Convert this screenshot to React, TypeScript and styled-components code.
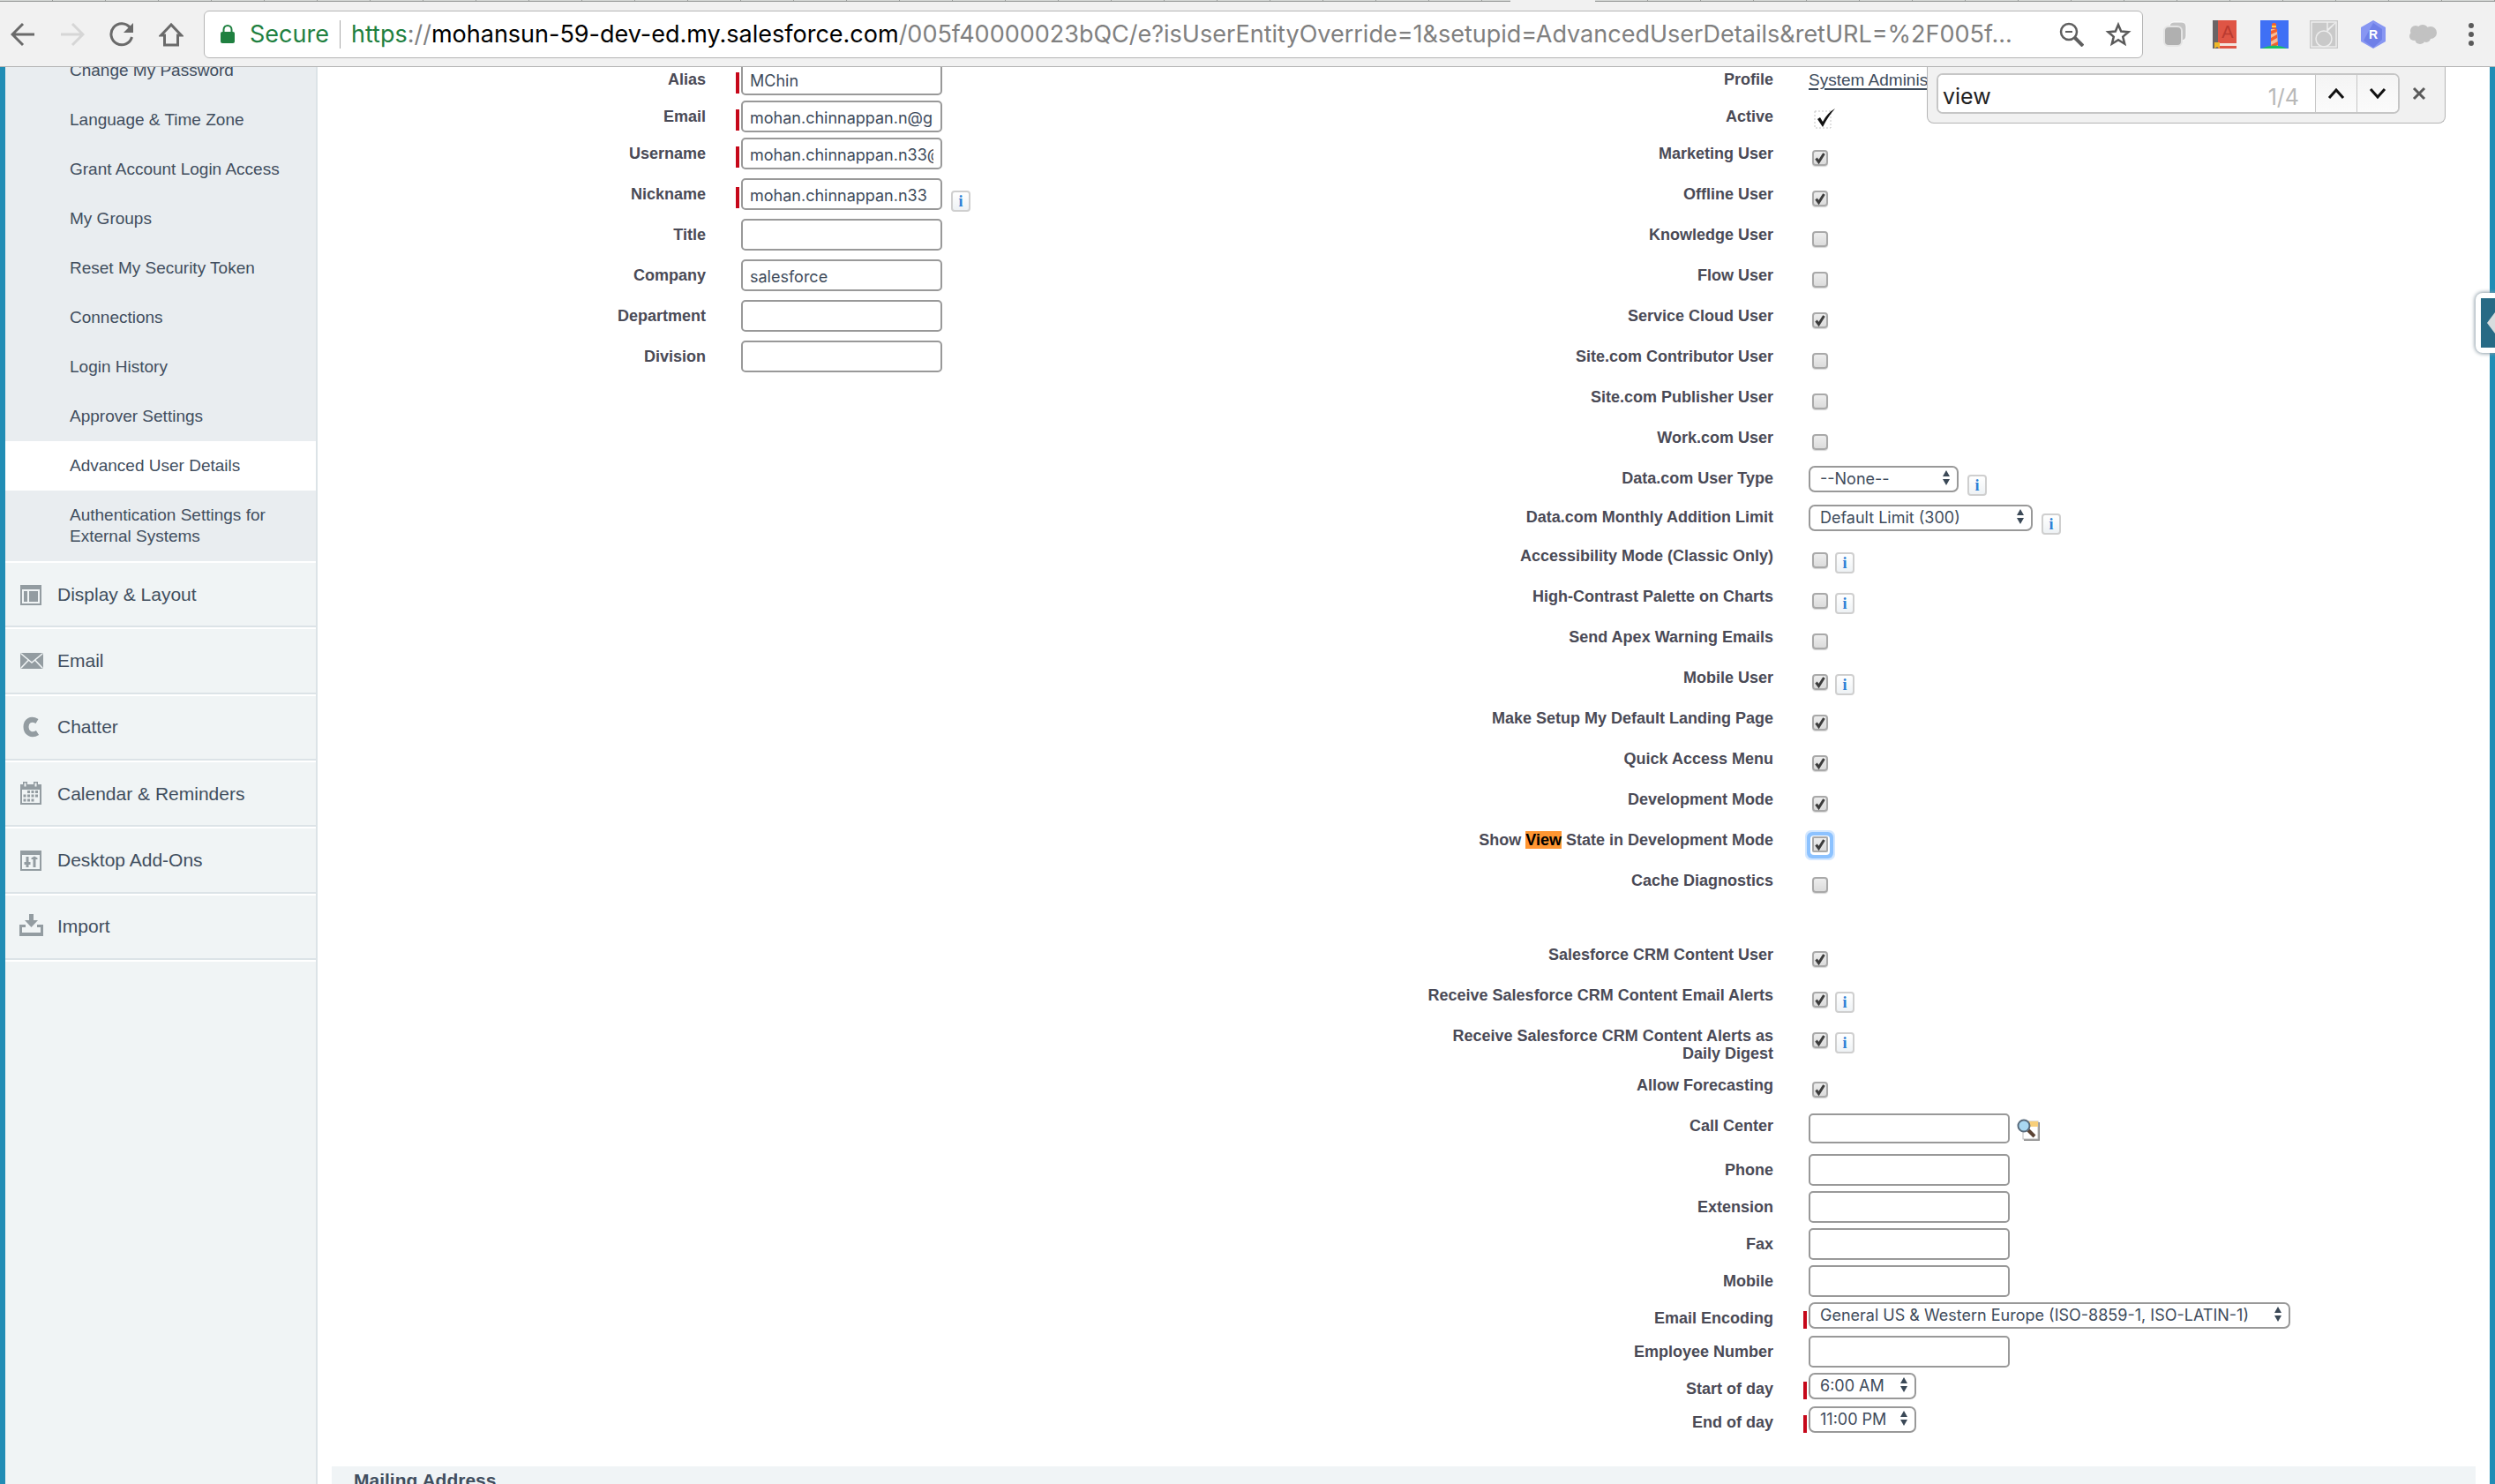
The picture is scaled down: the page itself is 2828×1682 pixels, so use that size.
import React from "react";
import styled, { createGlobalStyle } from "styled-components";

const ui = `"Inter", "Roboto", sans-serif`;
const arial = `"Liberation Sans", Arial, sans-serif`;

const GlobalStyle = createGlobalStyle`
  * { box-sizing: border-box; }
  body { margin: 0; background: #fff; font-family: ${arial}; color: #3e4b5b; }
  button, input, select { font: inherit; color: inherit; }
  button { border: 0; padding: 0; background: none; cursor: pointer; }
  svg { display: block; flex: none; }
`;

/* ---------- browser chrome ---------- */

const Window = styled.div`
  display: flex;
  flex-direction: column;
  height: 100vh;
  overflow: hidden;
`;

const TabStrip = styled.div`
  display: flex;
  flex: none;
  height: 2px;
  background: #f1f1f1;
`;

const TabEdges = styled.div<{ $grow: number }>`
  flex: ${(p) => p.$grow} 1 0;
  border-bottom: 1px solid #979a98;
  background: repeating-linear-gradient(90deg, #d5d8d6 0 59px, #9a9d9b 59px 60px);
`;

const ActiveTabGap = styled.div`
  flex: 0 0 96px;
`;

const Toolbar = styled.header`
  display: flex;
  align-items: center;
  flex: none;
  height: 74px;
  padding: 0 12px;
  background: #f1f1f1;
  border-bottom: 1px solid #b4b4b4;
`;

const NavButtons = styled.nav`
  display: flex;
  gap: 28px;
  padding-right: 23px;
`;

const IconButton = styled.button`
  display: flex;
  align-items: center;
  justify-content: center;
  min-width: 28px;
  height: 32px;
`;

const AddressBar = styled.div`
  display: flex;
  align-items: center;
  flex: 1;
  min-width: 0;
  height: 54px;
  padding: 0 12px 0 17px;
  border: 1px solid #b5b5b5;
  border-radius: 6px;
  background: #fff;
  font-family: ${ui};
  font-size: 27px;
  line-height: 36px;
`;

const Secure = styled.span`
  padding: 0 12px 0 16px;
  color: #1f8040;
`;

const AddressDivider = styled.span`
  width: 1px;
  height: 32px;
  margin-right: 12px;
  background: #a9a9a9;
`;

const Url = styled.div`
  flex: 1;
  min-width: 0;
  overflow: hidden;
  white-space: nowrap;
  color: #808080;
  b { font-weight: 400; color: #000; }
  i { font-style: normal; color: #1f8040; }
`;

const AddressActions = styled.div`
  display: flex;
  gap: 24px;
`;

const Extensions = styled.div`
  display: flex;
  align-items: center;
  gap: 24px;
  padding-left: 21px;
`;

const ExtensionButton = styled(IconButton)`
  width: 32px;
`;

const MenuButton = styled(IconButton)`
  width: 30px;
`;

/* ---------- page frame ---------- */

const Page = styled.div`
  position: relative;
  display: flex;
  flex: 1;
  min-height: 0;
  overflow: hidden;
  padding: 0 6px;
  background: #218db5;
`;

const FindBar = styled.form`
  position: absolute;
  top: -1px;
  right: 56px;
  display: flex;
  align-items: center;
  width: 588px;
  height: 65px;
  padding: 0 8px 2px 10px;
  background: #f1f1f1;
  border: 1px solid #b4b4b4;
  border-top: 0;
  border-radius: 0 0 8px 8px;
  font-family: ${ui};
`;

const FindBox = styled.div`
  display: flex;
  flex: 1;
  height: 46px;
  border: 2px solid #c6c6c6;
  border-radius: 7px;
  background: #fff;
  overflow: hidden;
`;

const FindInput = styled.input`
  flex: 1;
  min-width: 0;
  padding: 6px 5px 0;
  border: 0;
  outline: 0;
  font-size: 25px;
  color: #222;
`;

const FindCount = styled.output`
  padding: 8px 18px 0 0;
  font-size: 25px;
  line-height: 34px;
  color: #b8b8b8;
`;

const FindStep = styled.button`
  display: flex;
  align-items: center;
  justify-content: center;
  width: 47px;
  border-left: 1px solid #c6c6c6;
  background: linear-gradient(#f4f4f4, #fbfbfb);
`;

const FindClose = styled.button`
  display: flex;
  align-items: center;
  justify-content: center;
  width: 43px;
  height: 46px;
`;

const SideTab = styled.button`
  position: absolute;
  top: 256px;
  right: 0;
  display: flex;
  align-items: center;
  justify-content: flex-end;
  width: 22px;
  height: 68px;
  border-radius: 8px 0 0 8px;
  background: #fff;
  box-shadow: 0 0 4px 1px #8a9aa5;
`;

const SideTabFace = styled.span`
  display: flex;
  align-items: center;
  justify-content: flex-end;
  width: 16px;
  height: 56px;
  background: #276a85;
`;

/* ---------- setup menu ---------- */

const Sidebar = styled.aside`
  flex: 0 0 354px;
  margin-top: -24px;
  background: #f0f4f5;
  border-right: 2px solid #dce3e7;
`;

const SubItem = styled.a<{ $active?: boolean }>`
  display: block;
  padding: 16px 30px 16px 73px;
  background: ${(p) => (p.$active ? "#fff" : "#e9edf0")};
  color: #414e5e;
  font-size: 19px;
  line-height: 24px;
  text-decoration: none;
`;

const GroupList = styled.nav`
  display: grid;
  grid-auto-rows: 1fr;
  height: 454px;
  border-bottom: 2px solid #fff;
`;

const Group = styled.a`
  display: flex;
  align-items: center;
  gap: 15px;
  padding: 0 16px;
  border-top: 2px solid #fff;
  border-bottom: 2px solid #dce3e7;
  color: #414e5e;
  font-size: 21px;
  line-height: 28px;
  text-decoration: none;
`;

const GroupIcon = styled.svg`
  width: 28px;
  height: 28px;
  fill: #939ca1;
`;

/* ---------- user form ---------- */

const Main = styled.main`
  flex: 1;
  min-width: 0;
  padding: 0 16px;
  margin-top: -6px;
  background: #fff;
`;

const FormRows = styled.form`
  padding: 0 10px 32px 0;
`;

const Row = styled.div`
  display: grid;
  grid-template-columns: 424px 40px 1fr 424px 40px 1fr;
  align-items: start;
  min-height: 38px;
`;

const Label = styled.label`
  padding: 10px 0 6px 20px;
  color: #4a4a56;
  font-size: 18px;
  font-weight: 700;
  line-height: 20px;
  text-align: right;
  mark { background: #ff9632; color: #000; }
`;

const EmptyCell = styled.span`
  grid-column: span 3;
`;

const RequiredBar = styled.span<{ $shown?: boolean; $short?: boolean }>`
  justify-self: end;
  width: 4px;
  height: ${(p) => (p.$short ? 20 : 24)}px;
  margin: 12px 2px 0 0;
  background: ${(p) => (p.$shown ? "#c6081a" : "transparent")};
`;

const Field = styled.div`
  display: flex;
  align-items: flex-start;
  gap: 8px;
`;

const TextInput = styled.input<{ $lookup?: boolean }>`
  width: 228px;
  height: ${(p) => (p.$lookup ? 34 : 36)}px;
  margin: ${(p) => (p.$lookup ? "6px 0 10px" : "2px 2px 4px 0")};
  padding: 3px 8px 0;
  border: 2px solid #999;
  border-radius: 5px;
  background: #fff;
  font-family: ${ui};
  font-size: 18px;
`;

const SelectWrap = styled.span<{ $info?: boolean }>`
  display: grid;
  align-items: center;
  height: 30px;
  margin: ${(p) => (p.$info ? "6px 2px 0 0" : "2px 0 6px")};
  > * { grid-area: 1 / 1; }
  > svg { justify-self: end; margin: 0 9px 2px 0; pointer-events: none; }
`;

const Select = styled.select<{ $width: number }>`
  appearance: none;
  width: ${(p) => p.$width}px;
  height: 30px;
  padding: 0 20px 1px 11px;
  border: 2px solid #999;
  border-radius: 7px;
  background: #fff;
  font-family: ${ui};
  font-size: 18px;
`;

const CheckWrap = styled.span`
  display: grid;
  margin: 16px 0 12px 4px;
  > * { grid-area: 1 / 1; }
  > svg { pointer-events: none; }
`;

const Check = styled.input<{ $focused?: boolean }>`
  appearance: none;
  width: 18px;
  height: 18px;
  margin: 0;
  border: 2px solid #a9a9a9;
  border-radius: ${(p) => (p.$focused ? 2 : 4)}px;
  background: linear-gradient(#ededed, #dcdcdc);
  box-shadow: ${(p) =>
    p.$focused
      ? "0 1px 0 2px #fff, 0 1px 0 6px #8cc2ff, 0 1px 0 8px #d3e7ff"
      : "0 1px 1px #d6d6d6"};
`;

const InfoButton = styled.button`
  width: 22px;
  height: 24px;
  margin: 16px 0 4px;
  border: 2px solid #cfcfcf;
  border-radius: 4px;
  background: linear-gradient(#fff, #eef2f5);
  color: #2b7fd6;
  font-family: "Liberation Serif", serif;
  font-size: 18px;
  font-weight: 700;
  line-height: 20px;
`;

const ProfileLink = styled.a`
  padding-top: 10px;
  color: #3e4b5b;
  font-size: 19px;
  line-height: 22px;
  text-decoration: underline;
  text-decoration-thickness: 2px;
  text-underline-offset: 3px;
`;

const ActiveMark = styled.span`
  padding: 11px 0 0 6px;
`;

const LookupButton = styled.button`
  margin-top: 12px;
`;

const SectionTitle = styled.h3`
  margin: 0;
  padding: 4px 25px;
  background: #f0f4f6;
  color: #414e5e;
  font-size: 21px;
  line-height: 24px;
`;

/* ---------- drawings ---------- */

const Tick = () => (
  <svg width="18" height="18" viewBox="0 0 18 18">
    <path d="M4.5 9.5 L7.5 13.5 L13.5 4" fill="none" stroke="#3c3c3c" strokeWidth="3" />
  </svg>
);

const Arrows = () => (
  <svg width="10" height="20" viewBox="0 0 10 20" fill="#3b4957">
    <path d="M5 1 L9 8 H1 Z M5 18 L9 11 H1 Z" />
  </svg>
);

const groupIcons: Record<string, React.ReactNode> = {
  "Display & Layout": (
    <path fillRule="evenodd" d="M1 3h24v23H1z M3 8v16h20V8z M5 10h4v12H5z M11 10h10v12H11z" />
  ),
  Email: (
    <g>
      <rect x="1" y="5" width="26" height="18" rx="2" />
      <path d="M2 6 L14 16 L26 6 M2 22 L10 13.5 M26 22 L18 13.5" stroke="#f0f4f5" strokeWidth="1.6" fill="none" />
    </g>
  ),
  Chatter: (
    <path d="M20 7.5 C13 3.5 7.500 7 7.500 14 C7.500 21 14 24.500 20.500 20.500" fill="none" stroke="#939ca1" strokeWidth="6" />
  ),
  "Calendar & Reminders": (
    <g>
      <path fillRule="evenodd" d="M1 3h3V0h5v3h7V0h5v3h4v23H1z M3 9v15h20V9z M5.500 1.500v4h2v-4z M17.500 1.500v4h2v-4z" />
      <path d="M9 10h3v3H9z M13.500 10h3v3h-3z M18 10h3v3h-3z M4.500 14.500h3v3h-3z M9 14.500h3v3H9z M13.500 14.500h3v3h-3z M18 14.500h3v3h-3z M4.500 19.500h3v3h-3z M9 19.500h3v3H9z M13.500 19.500h3v3h-3z" />
    </g>
  ),
  "Desktop Add-Ons": (
    <path fillRule="evenodd" d="M1 3h24v23H1z M3 8v16h20V8z M7.500 10h3v6h2v3h-2v3h-3v-3h-2v-3h2z M15.500 22v-9h-2v-1.500l3.500-2 3.500 2V13h-2v9z" />
  ),
  Import: (
    <path d="M0 12h7v3H3v6h21v-6h-4v-3h7v13H0z M11 0h5v7h5l-7.500 8L6 7h5z" />
  ),
};

/* ---------- data ---------- */

type Item = {
  label: string;
  kind: "text" | "check" | "select" | "link" | "active";
  value?: string;
  on?: boolean;
  required?: boolean;
  info?: boolean;
  lookup?: boolean;
  width?: number;
};

const text = (label: string, value = "", extra: Partial<Item> = {}): Item => ({ label, kind: "text", value, ...extra });
const check = (label: string, on = false, info = false): Item => ({ label, kind: "check", on, info });
const select = (label: string, value: string, width: number, extra: Partial<Item> = {}): Item => ({
  label, kind: "select", value, width, ...extra,
});

const rows: [Item | null, Item | null][] = [
  [text("Alias", "MChin", { required: true }), { label: "Profile", kind: "link", value: "System Administrator" }],
  [text("Email", "mohan.chinnappan.n@gmail.com", { required: true }), { label: "Active", kind: "active" }],
  [text("Username", "mohan.chinnappan.n33@gmail.com", { required: true }), check("Marketing User", true)],
  [text("Nickname", "mohan.chinnappan.n33", { required: true, info: true }), check("Offline User", true)],
  [text("Title"), check("Knowledge User")],
  [text("Company", "salesforce"), check("Flow User")],
  [text("Department"), check("Service Cloud User", true)],
  [text("Division"), check("Site.com Contributor User")],
  [null, check("Site.com Publisher User")],
  [null, check("Work.com User")],
  [null, select("Data.com User Type", "--None--", 170, { info: true })],
  [null, select("Data.com Monthly Addition Limit", "Default Limit (300)", 254, { info: true })],
  [null, check("Accessibility Mode (Classic Only)", false, true)],
  [null, check("High-Contrast Palette on Charts", false, true)],
  [null, check("Send Apex Warning Emails")],
  [null, check("Mobile User", true, true)],
  [null, check("Make Setup My Default Landing Page", true)],
  [null, check("Quick Access Menu", true)],
  [null, check("Development Mode", true)],
  [null, check("Show View State in Development Mode", true)],
  [null, check("Cache Diagnostics")],
  [null, null],
  [null, check("Salesforce CRM Content User", true)],
  [null, check("Receive Salesforce CRM Content Email Alerts", true, true)],
  [null, check("Receive Salesforce CRM Content Alerts as Daily Digest", true, true)],
  [null, check("Allow Forecasting", true)],
  [null, text("Call Center", "", { lookup: true })],
  [null, text("Phone")],
  [null, text("Extension")],
  [null, text("Fax")],
  [null, text("Mobile")],
  [null, select("Email Encoding", "General US & Western Europe (ISO-8859-1, ISO-LATIN-1)", 546, { required: true })],
  [null, text("Employee Number")],
  [null, select("Start of day", "6:00 AM", 122, { required: true })],
  [null, select("End of day", "11:00 PM", 122, { required: true })],
];

const subItems = [
  "Change My Password", "Language & Time Zone", "Grant Account Login Access", "My Groups",
  "Reset My Security Token", "Connections", "Login History", "Approver Settings",
  "Advanced User Details", "Authentication Settings for External Systems",
];

const searchTerm = "View";

const Highlighted = ({ value }: { value: string }) => {
  const [before, after] = value.split(searchTerm);
  return after === undefined ? <>{value}</> : <>{before}<mark>{searchTerm}</mark>{after}</>;
};

const Cell = ({ item }: { item: Item | null }) => {
  if (!item) return <EmptyCell />;
  const id = item.label.toLowerCase().replace(/[^a-z]+/g, "-");
  return (
    <>
      <Label htmlFor={id}><Highlighted value={item.label} /></Label>
      <RequiredBar $shown={item.required} $short={item.kind === "select"} />
      <Field>
        {item.kind === "text" && <TextInput id={id} type="text" defaultValue={item.value} $lookup={item.lookup} />}
        {item.kind === "check" && (
          <CheckWrap>
            <Check id={id} type="checkbox" defaultChecked={item.on} $focused={item.label.includes(searchTerm)} />
            {item.on && <Tick />}
          </CheckWrap>
        )}
        {item.kind === "select" && (
          <SelectWrap $info={item.info}>
            <Select id={id} $width={item.width ?? 170}><option>{item.value}</option></Select>
            <Arrows />
          </SelectWrap>
        )}
        {item.kind === "link" && <ProfileLink id={id} href="#profile">{item.value}</ProfileLink>}
        {item.kind === "active" && (
          <ActiveMark id={id}>
            <svg width="26" height="24" viewBox="0 0 26 24">
              <rect x="1" y="3" width="18" height="19" fill="none" stroke="#c4c4c4" strokeDasharray="2 2" />
              <path d="M4 12 L7 10 L10 15 Q15 5 24 0 Q16 9 10 21 Z" fill="#111" />
            </svg>
          </ActiveMark>
        )}
        {item.lookup && (
          <LookupButton type="button" aria-label="Call Center Lookup">
            <svg width="28" height="26" viewBox="0 0 28 26">
              <rect x="8" y="4" width="18" height="21" fill="#8d8d8d" />
              <rect x="7" y="3" width="17" height="20" fill="#fff" stroke="#bbb" />
              <rect x="14" y="3" width="10" height="6" fill="#f8cf7a" />
              <path d="M13 13 L20 20" stroke="#5b4334" strokeWidth="4" />
              <circle cx="8" cy="8" r="6.500" fill="#a9d8f2" stroke="#596b7c" strokeWidth="2" />
            </svg>
          </LookupButton>
        )}
        {item.info && <InfoButton type="button" aria-label={`${item.label} help`}>i</InfoButton>}
      </Field>
    </>
  );
};

export default function App() {
  return (
    <Window>
      <GlobalStyle />
      <TabStrip><TabEdges $grow={1712} /><ActiveTabGap /><TabEdges $grow={1020} /></TabStrip>
      <Toolbar>
        <NavButtons>
          <IconButton aria-label="Back">
            <svg width="28" height="28" viewBox="0 0 28 28" fill="none" stroke="#6a6a6a" strokeWidth="3"><path d="M27 14H3M14 2L2 14L14 26" /></svg>
          </IconButton>
          <IconButton aria-label="Forward">
            <svg width="28" height="28" viewBox="0 0 28 28" fill="none" stroke="#d6d6d6" strokeWidth="3"><path d="M1 14H25M14 2L26 14L14 26" /></svg>
          </IconButton>
          <IconButton aria-label="Reload">
            <svg width="28" height="28" viewBox="0 0 28 28"><path d="M23.500 6.500A12 12 0 1 0 25.500 17" fill="none" stroke="#6a6a6a" strokeWidth="3" /><path d="M27 1V12H16Z" fill="#6a6a6a" /></svg>
          </IconButton>
          <IconButton aria-label="Home">
            <svg width="28" height="28" viewBox="0 0 28 28" fill="none" stroke="#6a6a6a" strokeWidth="3"><path d="M14 3L2.500 15H6.500V26H21.500V15H25.500Z" /></svg>
          </IconButton>
        </NavButtons>
        <AddressBar>
          <svg width="18" height="24" viewBox="0 0 18 24"><path d="M4.500 11V6.500a4.500 4.500 0 0 1 9 0V11" fill="none" stroke="#1f8040" strokeWidth="2" /><rect x="1" y="9" width="16" height="13" rx="2" fill="#1f8040" /></svg>
          <Secure>Secure</Secure>
          <AddressDivider />
          <Url><i>https</i>://<b>mohansun-59-dev-ed.my.salesforce.com</b>/005f40000023bQC/e?isUserEntityOverride=1&amp;setupid=AdvancedUserDetails&amp;retURL=%2F005f...</Url>
          <AddressActions>
            <IconButton aria-label="Zoom">
              <svg width="28" height="28" viewBox="0 0 28 28" fill="none" stroke="#5f5f5f" strokeWidth="2.500"><circle cx="11" cy="11" r="9" /><path d="M7 11H15" strokeWidth="2" /><path d="M17.500 17.500L27 27" strokeWidth="4" /></svg>
            </IconButton>
            <IconButton aria-label="Bookmark">
              <svg width="30" height="30" viewBox="0 0 30 30" fill="none" stroke="#5a5a5a" strokeWidth="2.500"><path d="M15 4L18.200 11.500L26.500 12.200L20.200 17.600L22.200 25.700L15 21.300L7.800 25.700L9.800 17.600L3.500 12.200L11.800 11.500Z" /></svg>
            </IconButton>
          </AddressActions>
        </AddressBar>
        <Extensions>
          <ExtensionButton aria-label="Windows">
            <svg width="32" height="32" viewBox="0 0 32 32"><rect x="9" y="2" width="19" height="21" rx="5" fill="#c4c4c4" stroke="#fff" /><rect x="3" y="7" width="20" height="22" rx="5" fill="#b0b0b0" stroke="#e4e4e4" strokeWidth="2" /></svg>
          </ExtensionButton>
          <ExtensionButton aria-label="Dictionary">
            <svg width="30" height="32" viewBox="0 0 30 32"><rect x="2" y="0" width="26" height="32" fill="#df5545" /><rect x="1" y="0" width="6" height="32" fill="#6a6466" /><text x="18" y="20" fontSize="20" fontFamily="Liberation Sans" textAnchor="middle" fill="#b93a30">A</text><rect x="7" y="26" width="21" height="3" fill="#f4e6df" /><path d="M3 25h6v7l-3-2-3 2z" fill="#f0b928" /></svg>
          </ExtensionButton>
          <ExtensionButton aria-label="Lighthouse">
            <svg width="32" height="32" viewBox="0 0 32 32"><rect width="32" height="32" fill="#3f70f5" /><path d="M12 10H19L20 30H12Z" fill="#f4bd9a" /><path d="M12 12L19 9.500V13L12 16ZM12 20L19 16V20L12 24ZM12 28L20 24V28L14 31Z" fill="#f2602f" /><rect x="13" y="3" width="5" height="7" rx="2" fill="#f2602f" /><rect x="13" y="6" width="5" height="2" fill="#ffd54a" /><path d="M1 32Q16 25 31 32Z" fill="#18c064" /></svg>
          </ExtensionButton>
          <ExtensionButton aria-label="Capture">
            <svg width="32" height="32" viewBox="0 0 32 32"><rect width="32" height="32" fill="#c9c9c9" /><g fill="none" stroke="#ededed" strokeWidth="1.500"><rect x="2" y="2" width="28" height="28" /><path d="M20 2V11L29 3M19 13L27 5" /><circle cx="16" cy="21" r="9" /></g></svg>
          </ExtensionButton>
          <ExtensionButton aria-label="Resource">
            <svg width="32" height="32" viewBox="0 0 32 32"><path d="M16 0L30 8V24L16 32L2 24V8Z" fill="#8796f2" /><path d="M16 3L26 10V22L16 31L5 23Z" fill="#6f80e8" /><text x="16" y="21" fontSize="14" fontWeight="700" fontFamily="Liberation Sans" textAnchor="middle" fill="#fff">R</text></svg>
          </ExtensionButton>
          <ExtensionButton aria-label="Salesforce">
            <svg width="32" height="24" viewBox="0 0 32 24" fill="#c2c2c2"><circle cx="8" cy="8" r="6" /><circle cx="16" cy="8" r="7" /><circle cx="25" cy="10" r="7" /><circle cx="6" cy="14" r="5" /><circle cx="13" cy="17" r="6" /><circle cx="20" cy="16" r="5" /></svg>
          </ExtensionButton>
          <MenuButton aria-label="Menu">
            <svg width="8" height="28" viewBox="0 0 8 28" fill="#5a5a5a"><circle cx="4" cy="4" r="3" /><circle cx="4" cy="14" r="3" /><circle cx="4" cy="24" r="3" /></svg>
          </MenuButton>
        </Extensions>
      </Toolbar>

      <Page>
        <Sidebar>
          <nav>
            {subItems.map((name) => (
              <SubItem key={name} href="#setup" $active={name === "Advanced User Details"}>{name}</SubItem>
            ))}
          </nav>
          <GroupList>
            {Object.keys(groupIcons).map((name) => (
              <Group key={name} href="#setup">
                <GroupIcon viewBox="0 0 28 28">{groupIcons[name]}</GroupIcon>
                {name}
              </Group>
            ))}
          </GroupList>
        </Sidebar>

        <Main>
          <FormRows>
            {rows.map(([left, right], index) => (
              <Row key={index}>
                <Cell item={left} />
                <Cell item={right} />
              </Row>
            ))}
          </FormRows>
          <SectionTitle>Mailing Address</SectionTitle>
        </Main>

        <FindBar>
          <FindBox>
            <FindInput aria-label="Find in page" defaultValue="view" />
            <FindCount>1/4</FindCount>
            <FindStep type="button" aria-label="Previous">
              <svg width="20" height="14" viewBox="0 0 20 14" fill="none" stroke="#111" strokeWidth="3"><path d="M2 12L10 3L18 12" /></svg>
            </FindStep>
            <FindStep type="button" aria-label="Next">
              <svg width="20" height="14" viewBox="0 0 20 14" fill="none" stroke="#111" strokeWidth="3"><path d="M2 2L10 11L18 2" /></svg>
            </FindStep>
          </FindBox>
          <FindClose type="button" aria-label="Close">
            <svg width="16" height="16" viewBox="0 0 16 16" fill="none" stroke="#5a5a5a" strokeWidth="3"><path d="M2 2L14 14M14 2L2 14" /></svg>
          </FindClose>
        </FindBar>

        <SideTab aria-label="Open help panel">
          <SideTabFace>
            <svg width="9" height="24" viewBox="0 0 9 24" fill="#d8dcde"><path d="M9 0V24L0 12Z" /></svg>
          </SideTabFace>
        </SideTab>
      </Page>
    </Window>
  );
}
